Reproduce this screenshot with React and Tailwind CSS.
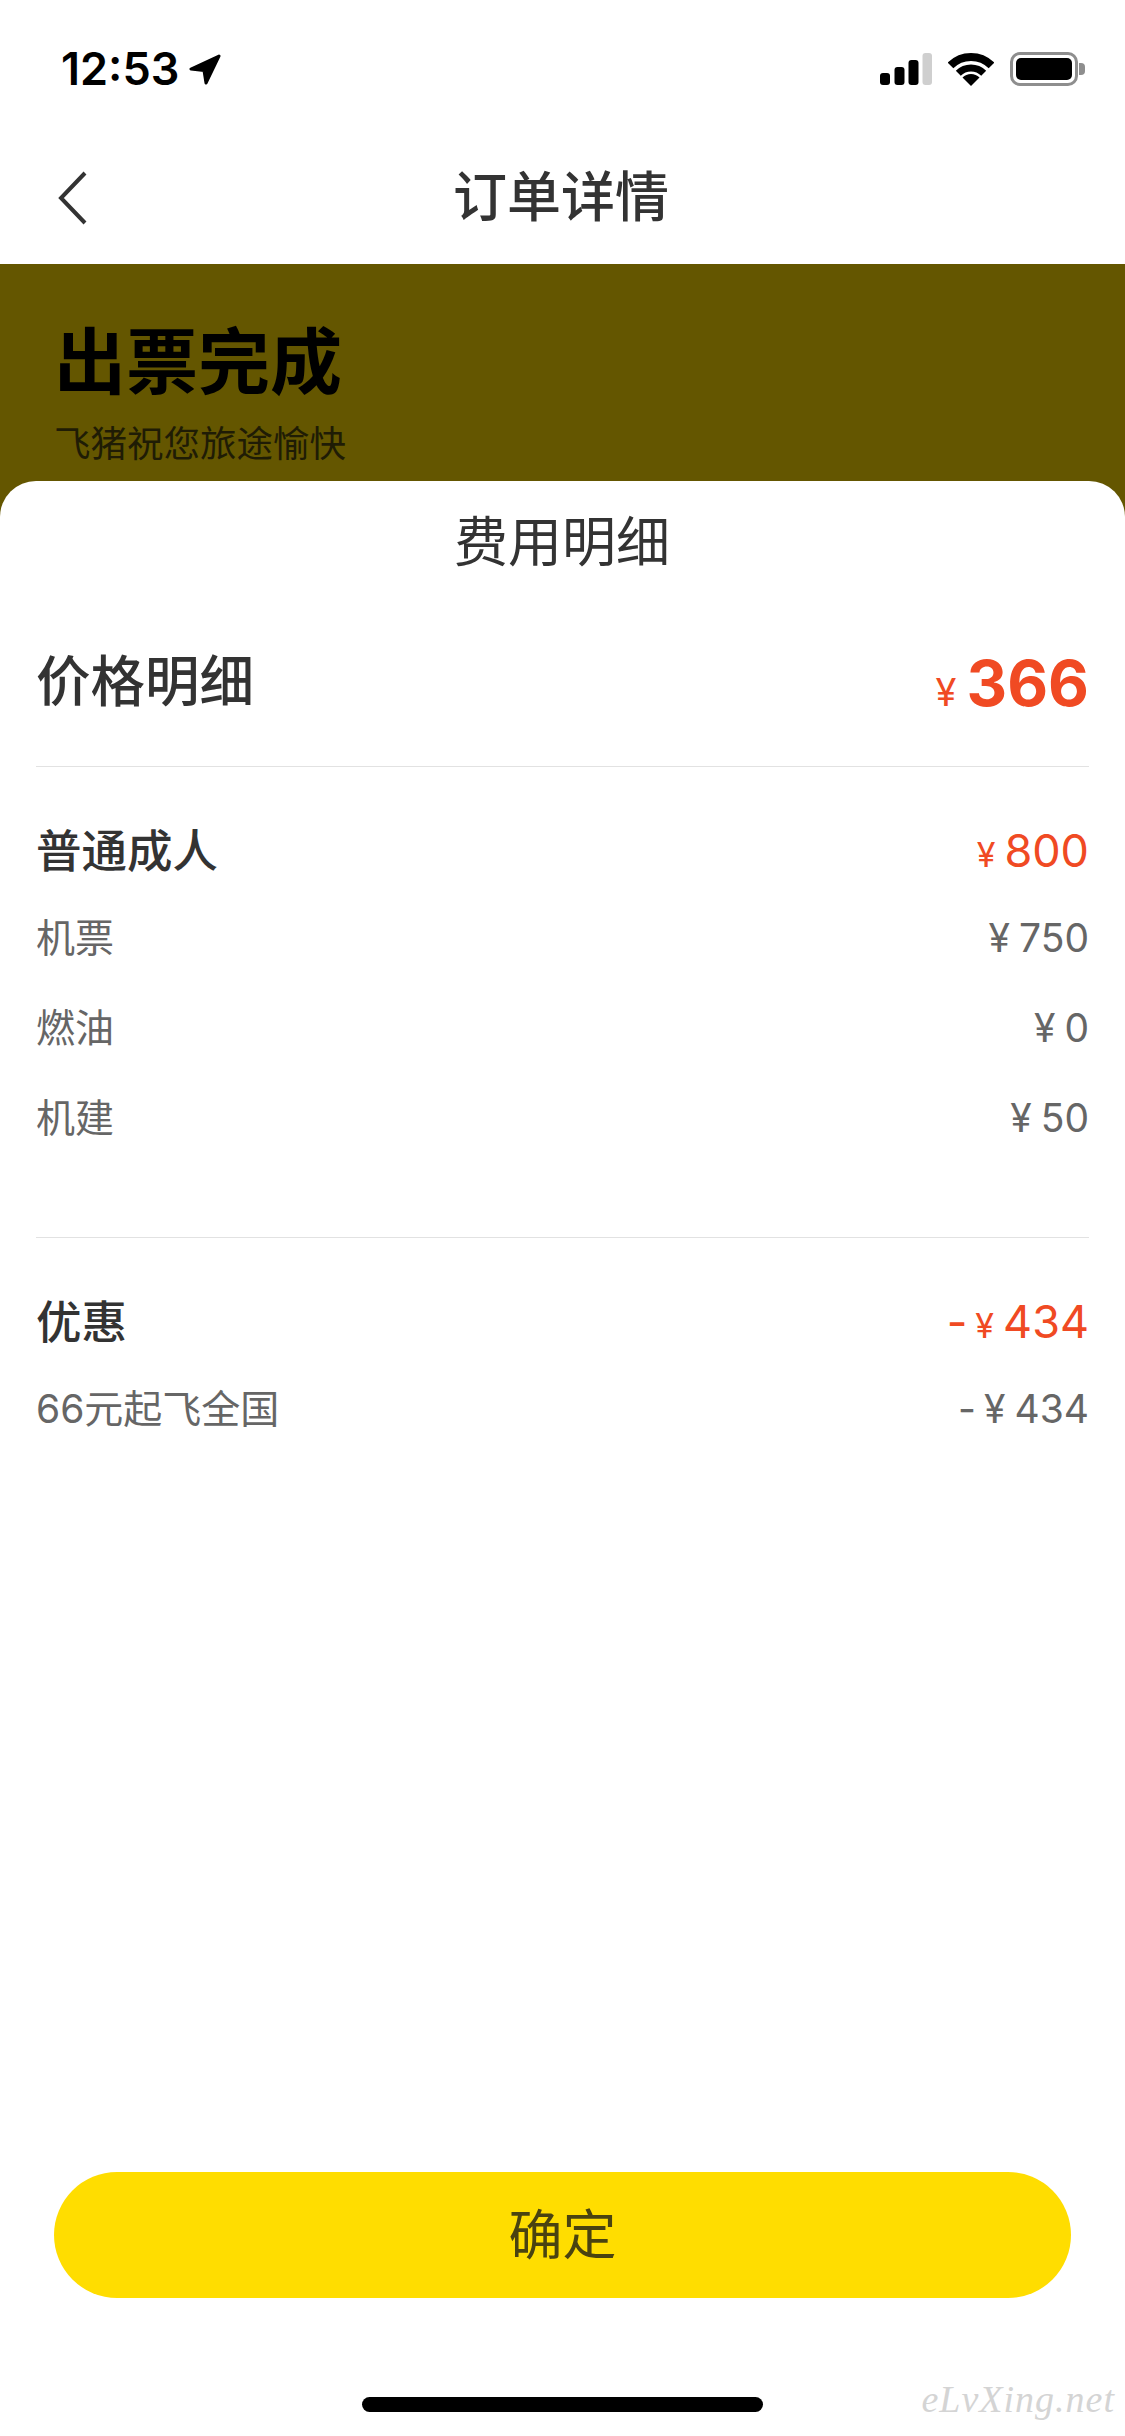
import React from 'react';

const Signal = () => (
  <svg width="52" height="32" viewBox="0 0 52 32" fill="black">
    <rect x="0" y="20" width="10" height="12" rx="3" />
    <rect x="14.5" y="14" width="10" height="18" rx="3" />
    <rect x="28.5" y="7" width="10" height="25" rx="3" />
    <rect x="42.5" y="0" width="9.5" height="32" rx="3" fill="#cfcfcf" />
  </svg>
);

const Wifi = () => (
  <svg width="46" height="33" viewBox="0 0 46 33" fill="none" stroke="black">
    <path d="M2.5 12.5A29 29 0 0 1 43.5 12.5" strokeWidth="8" />
    <path d="M10.3 20.3A18 18 0 0 1 35.7 20.3" strokeWidth="7" />
    <path d="M23 33L14.5 24.5A12 12 0 0 1 31.5 24.5Z" fill="black" stroke="none" />
  </svg>
);

const Battery = () => (
  <div className="flex items-center gap-[1px]">
    <div className="w-[68px] h-[34px] border-[3px] border-[#8e8e8e] rounded-[10px] p-[3px]">
      <div className="w-full h-full bg-black rounded-[5px]"></div>
    </div>
    <div className="w-[6px] h-[12px] bg-[#8e8e8e] rounded-r-[4px]"></div>
  </div>
);

const LocationArrow = () => (
  <svg width="32" height="31" viewBox="0 0 32 31" fill="black" stroke="black" strokeWidth="3" strokeLinejoin="round">
    <path d="M30 2L2 15L15 16.500L17 29Z" />
  </svg>
);

const Price = ({ amount, minus, color = 'text-[#666666]', yen = 'text-[39px]', gap = 'ml-[9px]' }) => (
  <div className={`flex items-baseline ${color}`}>
    {minus && <span className="mr-[8px]">-</span>}
    <span className={yen}>¥</span>
    <span className={gap}>{amount}</span>
  </div>
);

const Row = ({ label, amount, minus }) => (
  <div className="h-[90px] flex items-center justify-between text-[39px] text-[#666666]">
    <span>{label}</span>
    <Price amount={amount} minus={minus} />
  </div>
);

const SectionHead = ({ label, amount, minus }) => (
  <div className="h-[56px] mb-[14px] flex items-center justify-between text-[45px]">
    <span className="text-[45.500px] font-medium text-[#333333] translate-y-[1px]">{label}</span>
    <Price amount={amount} minus={minus} color="text-[#f04a23]" yen="text-[34px]" />
  </div>
);

export default function App() {
  return (
    <div className="relative w-[1125px] h-[2436px] flex flex-col bg-white font-['Inter','Noto_Sans_CJK_SC',sans-serif] overflow-hidden">
      {/* status bar */}
      <div className="h-[132px] flex justify-between items-start pt-[50px] pl-[61px] pr-[40px]">
        <div className="flex items-center gap-[10px] text-[45px] font-semibold leading-[38px] text-black">
          <span>12:53</span>
          <LocationArrow />
        </div>
        <div className="flex items-center gap-[16px] pt-[2px]">
          <Signal />
          <Wifi />
          <Battery />
        </div>
      </div>

      {/* nav */}
      <div className="relative h-[132px] flex items-center justify-center pb-[2px] pr-[3px]">
        <svg className="absolute left-[55px] top-[39px]" width="34" height="54" viewBox="0 0 34 54" fill="none" stroke="#333333" strokeWidth="4">
          <path d="M30 2L6 27L30 52" />
        </svg>
        <span className="text-[54px] font-medium text-[#333333]">订单详情</span>
      </div>

      {/* status banner + sheet */}
      <div className="flex-1 flex flex-col bg-[#645600]">
        <div className="h-[217px] pl-[54px] pt-[50px]">
          <div className="text-[72px] leading-[96px] font-bold text-black">出票完成</div>
          <div className="text-[36.500px] leading-[50px] mt-[9px] text-[#1f1c05]">飞猪祝您旅途愉快</div>
        </div>

        <div className="flex-1 flex flex-col bg-white rounded-t-[36px] px-[36px]">
          <div className="h-[122px] flex items-center justify-center text-[54px] text-[#333333] pr-[1px]">费用明细</div>

          <div className="h-[164px] pb-[8px] flex items-center justify-between border-b border-[#e2e2e2]">
            <span className="text-[54.500px] font-medium text-[#333333] translate-y-[1px]">价格明细</span>
            <div className="flex items-baseline text-[#f04a23] translate-y-[3px]">
              <span className="text-[38px]">¥</span>
              <span className="ml-[10px] text-[63px] font-bold">366</span>
            </div>
          </div>

          <div className="pt-[56px] pb-[74px] border-b border-[#e2e2e2]">
            <SectionHead label="普通成人" amount="800" />
            <Row label="机票" amount="750" />
            <Row label="燃油" amount="0" />
            <Row label="机建" amount="50" />
          </div>

          <div className="pt-[56px]">
            <SectionHead label="优惠" amount="434" minus />
            <Row label="66元起飞全国" amount="434" minus />
          </div>

          <button className="mt-auto mx-[18px] h-[126px] rounded-full bg-[#ffdd00] text-[54px] text-[#4a4310]">确定</button>
          <div className="mt-[99px] mb-[24px] mx-auto w-[401px] h-[15px] rounded-full bg-black"></div>
        </div>
      </div>

      {/* watermark */}
      <div className="absolute right-[10px] bottom-[8px] font-['Liberation_Serif',serif] italic text-[38px] tracking-[1px] text-[#d4d4d4]">eLvXing.net</div>
    </div>
  );
}
